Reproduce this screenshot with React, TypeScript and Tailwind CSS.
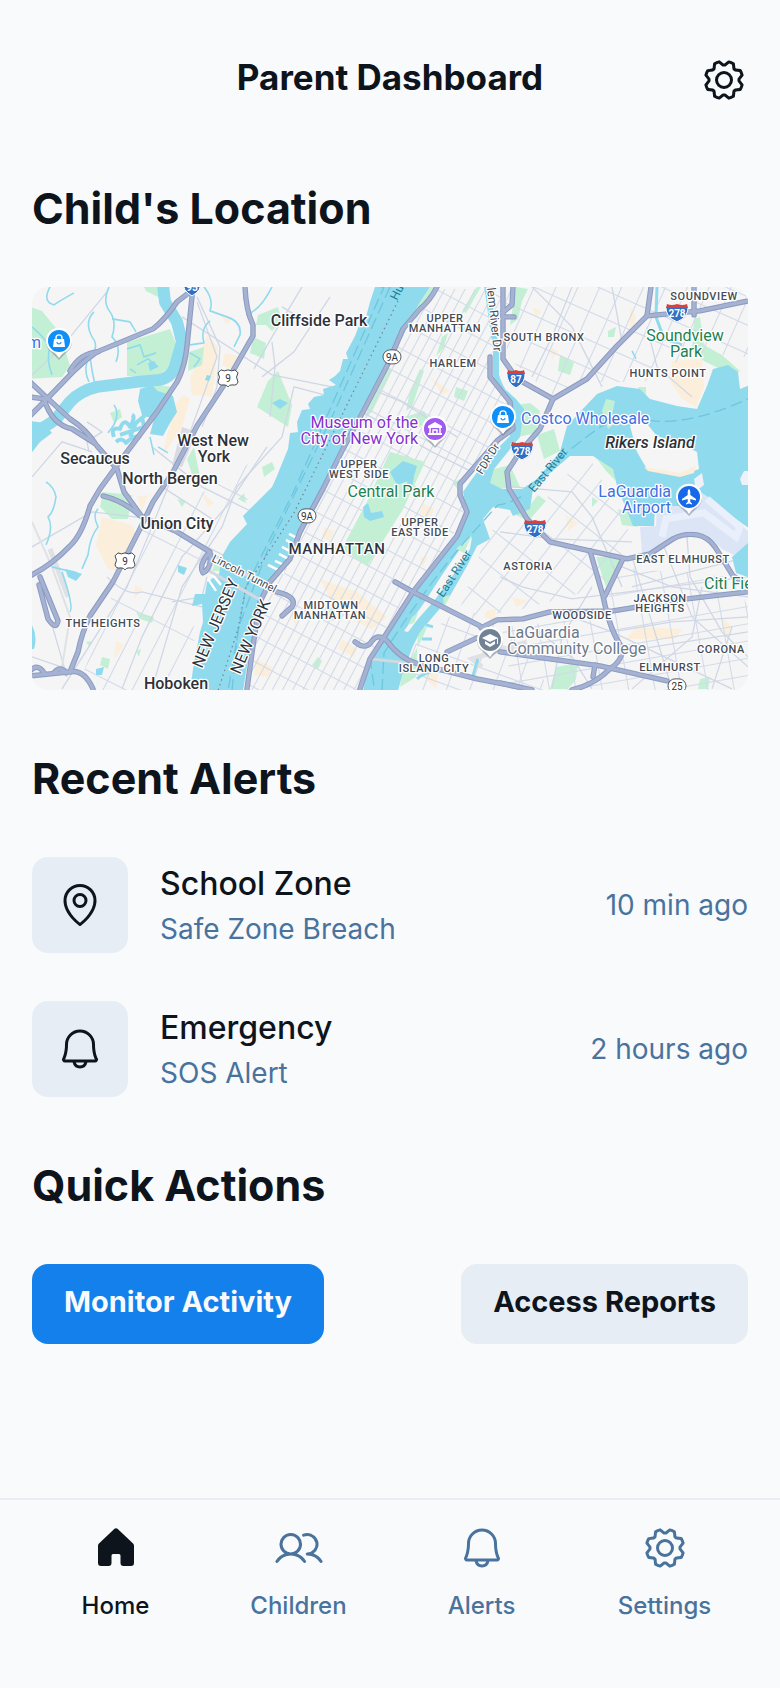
import type { ReactNode } from "react";
import { PiBell, PiGear } from "react-icons/pi";

function MapPinIcon() {
  return (
    <svg viewBox="0 0 256 256" fill="currentColor" className="size-12" aria-hidden="true">
      <path d="M128,64a40,40,0,1,0,40,40A40,40,0,0,0,128,64Zm0,64a24,24,0,1,1,24-24A24,24,0,0,1,128,128Zm0-112a88.1,88.1,0,0,0-88,88c0,31.4,14.51,64.68,42,96.25a254.19,254.19,0,0,0,41.45,38.3,8,8,0,0,0,9.18,0A254.19,254.19,0,0,0,174,200.25c27.45-31.57,42-64.85,42-96.25A88.1,88.1,0,0,0,128,16Zm0,206c-16.53-13-72-60.75-72-118a72,72,0,0,1,144,0C200,161.23,144.53,209,128,222Z" />
    </svg>
  );
}

function HouseIcon() {
  return (
    <svg viewBox="0 0 256 256" fill="currentColor" className="size-12" aria-hidden="true">
      <path d="M224,115.55V208a16,16,0,0,1-16,16H168a16,16,0,0,1-16-16V168a8,8,0,0,0-8-8H112a8,8,0,0,0-8,8v40a16,16,0,0,1-16,16H48a16,16,0,0,1-16-16V115.55a16,16,0,0,1,5.17-11.78l80-75.48.11-.11a16,16,0,0,1,21.53,0,1.14,1.14,0,0,0,.11.11l80,75.48A16,16,0,0,1,224,115.55Z" />
    </svg>
  );
}

function UsersIcon() {
  return (
    <svg viewBox="0 0 256 256" fill="currentColor" className="size-12" aria-hidden="true">
      <path d="M117.25,157.92a60,60,0,1,0-66.5,0A95.83,95.83,0,0,0,3.53,195.63a8,8,0,1,0,13.4,8.74,80,80,0,0,1,134.14,0,8,8,0,0,0,13.4-8.74A95.83,95.83,0,0,0,117.25,157.92ZM40,108a44,44,0,1,1,44,44A44.05,44.05,0,0,1,40,108Zm210.14,98.7a8,8,0,0,1-11.07-2.33A79.83,79.83,0,0,0,172,168a8,8,0,0,1,0-16,44,44,0,1,0-16.34-84.87,8,8,0,1,1-5.94-14.85,60,60,0,0,1,55.53,105.64,95.83,95.83,0,0,1,47.22,37.71A8,8,0,0,1,250.14,206.7Z" />
    </svg>
  );
}

/* ---------- Map ---------- */

const highways = [
  "M158,5 L145,15 Q132,34 121,42 L65,65 Q52,74 41,85 L15,112 L-2,129",
  "M161,0 L155,59 Q153,80 145,95 L125,125 L95,165 L68,202 L58,219 Q50,248 38,259 Q20,278 -2,289",
  "M-2,95 L14,110 L38,132 Q54,142 65,159 L85,182 L92,205 L110,230",
  "M-2,110 L12,112 Q20,138 40,142 L62,156",
  "M38,84 Q48,66 66,65",
  "M71,209 Q92,214 108,229 L145,245 L178,265 Q166,278 171,286 Q180,282 178,266",
  "M213,0 Q214,24 221,38 L221,49 L198,89 L165,139 L141,185 L121,215 L108,242 L81,295 L58,329 Q50,345 46,365 L38,385 L-2,389",
  "M38,385 Q52,382 61,402",
  "M7,298 L16,332 Q24,344 26,334 L8,290",
  "M-2,384 Q6,376 12,386 M22,386 Q28,378 34,386",
  "M405,0 Q398,14 388,22 L371,42 L355,79 L331,125 L311,162 L291,202 L268,245 L258,272 L238,295 L228,315 L221,359 L215,402",
  "M471,0 L471,72 L485,92 L521,112",
  "M458,70 L458,90 L478,115 L481,142 L466,153 L428,197 L428,208 L435,225 L425,249 L381,305 L351,352 L338,372 L328,402",
  "M716,14 L668,24 L615,29 L585,59 L555,92 L521,112 L508,142 L488,165 L475,185 L477,202 L495,232 L518,255 L558,264 L595,272 L618,267 L641,252 Q652,246 665,248 Q676,250 683,260 L701,289 L718,300",
  "M615,29 L619,0",
  "M471,30 L482,30 M481,0 L480,18 L470,26",
  "M558,264 L571,309 Q578,345 591,362 Q590,374 578,382 Q562,398 540,403",
  "M591,272 L573,309",
  "M716,305 L655,312 L581,324 L518,325 L491,332 L465,333 L449,341",
  "M363,295 L381,305 L448,339",
  "M323,355 Q334,364 340,354 Q346,346 355,354 Q368,372 386,377 L445,392 L486,400",
  "M415,365 L445,351",
  "M468,365 L568,379 L635,394",
  "M468,396 L500,403 M563,378 L561,390",
  "M245,305 Q266,310 260,320 L250,329",
  "M662,0 L662,28",
];

const minorRoads = [
  "M-2,90 L30,60 L75,5",
  "M165,15 L185,70 L160,140 L120,240 L95,300 L30,402",
  "M150,30 L240,88 L300,100",
  "M170,140 L185,100 L188,60 L165,10",
  "M270,0 L240,50 L222,82 M298,10 L262,65 L230,90",
  "M300,110 L262,100 L250,150 L205,200 L190,240 L150,300 L120,402",
  "M235,160 L196,218 L150,270 L110,350 L90,402",
  "M0,260 L60,225 L120,232 L238,292",
  "M0,190 L30,155 L60,165",
  "M55,135 L70,145 L55,155 L57,165",
  "M120,160 L170,200 L230,230",
  "M130,200 L180,232 M140,315 L170,310 L175,290",
  "M75,290 Q95,310 110,305 L170,320",
  "M20,338 L35,390 M0,370 L35,382",
  "M240,55 L243,80 L238,130 M250,20 L275,35",
  "M500,0 L540,40 L570,100 M540,0 L520,50 L500,90 M580,0 L590,55",
  "M615,40 L625,80 L660,110",
  "M468,245 L520,252 L600,255",
  "M480,200 L540,205 L560,230 L590,300",
  "M468,290 L490,300 L540,312 L716,290",
  "M600,300 L716,270 M590,280 L640,300 L716,310",
  "M580,345 L640,335 L716,330 M590,365 L716,345",
  "M600,270 L640,402 M630,255 L660,330 L716,380",
  "M655,250 L658,290 L690,345 L716,370",
  "M500,340 L540,370 L560,402 M540,330 L580,345 L700,402",
  "M520,402 L530,350 L560,300",
  "M600,402 L660,350 L670,300 M680,402 L700,340",
  "M310,90 L370,115 L425,150 M330,125 L400,165 L440,185",
];

const creeks = [
  "M18,0 Q10,15 22,18 L28,14 L42,6",
  "M77,0 Q70,15 78,25 Q85,35 80,50 Q90,60 84,75",
  "M80,32 L98,35 L104,45",
  "M62,25 Q52,35 60,50 Q68,60 58,70 Q60,85 63,98",
  "M55,75 Q52,85 57,95",
  "M0,40 Q12,50 18,60 Q14,72 20,88",
  "M172,0 Q182,12 178,24 L195,30 Q210,35 208,48 L202,60",
  "M158,58 L172,56 Q168,42 178,34 M162,80 L168,72 L158,66",
  "M240,0 Q228,24 214,28",
  "M82,118 Q90,130 76,146 M118,150 L122,168 M126,160 L136,166 M112,96 Q116,92 120,98",
  "M95,62 L108,58 L112,70 L124,66 M105,78 L116,72 L126,80 M98,82 L104,86",
  "M14,195 Q22,200 24,210 Q22,225 16,230 Q22,240 14,258",
  "M66,222 Q60,228 66,240 Q58,250 56,268 L50,282",
  "M20,280 L36,284 L46,288 M30,285 Q42,320 38,325",
  "M600,64 L604,72",
];

const creekPonds =
  "M33,282 L42,284 L50,287 L44,294 L36,290Z M146,278 L155,281 L152,288 L146,285Z M64,382 L72,380 L70,388 L64,388Z M0,338 Q6,350 2,362 L-2,362Z M116,76 L122,74 L126,80 L118,84Z M175,88 L179,89 L177,94 L173,93Z M240,116 L248,112 L256,116 L248,122Z";

const shore =
  "M474,103 L484,112 L492,122 L488,150 L475,166 L462,182 L458,196 L470,202 L490,202 L505,192 L528,165 L535,139 L548,125 L565,107 L585,99 L608,102 L618,112 L645,119 L665,122 L675,99 L681,82 L696,78 L706,85 L708,102 L718,98 L718,242 L675,212 L667,206 L650,219 L623,220 L622,239 L601,239 L585,199 L581,182 L561,169 L538,169 L518,186 L501,202 L498,222 L481,229 L478,223 L461,220 L451,232 L458,252 L445,259 L435,279 L418,309 L405,325 L388,345 L381,359 L371,385 L366,404 L331,404 L338,372 L348,352 L381,305 L405,275 L425,252 L435,225 L431,205 L440,192 L455,172 L478,149 L476,125Z";

const hudson =
  "M343,0 L338,15 L334,30 L328,36 L323,49 L314,66 L316,72 L311,72 L308,84 L303,89 L297,93 L304,98 L291,102 L292,108 L282,110 L276,117 L278,122 L270,123 L265,135 L266,145 L258,146 L256,162 L251,174 L245,189 L240,200 L231,209 L211,229 L215,237 L198,255 L190,269 L187,287 L175,295 L173,307 L163,307 L160,319 L170,317 L171,335 L168,345 L161,382 L158,404 L211,404 L215,379 L221,352 L225,325 L235,302 L238,292 L255,272 L268,242 L291,202 L293,195 L305,169 L323,142 L330,125 L341,102 L355,75 L371,49 L380,29 L388,15 L398,0Z";

const parks = [
  "M358,165 L393,175 L371,222 L335,279 L310,262 L335,215Z",
  "M95,55 L138,42 L145,59 L135,82 L125,89 L95,89Z",
  "M-2,20 L10,24 L28,46 L38,79 L30,90 L-2,92Z",
  "M112,0 L131,0 L130,12 L114,4Z",
  "M226,28 L236,24 L246,20 L250,34 L240,44 L234,38 L224,38Z",
  "M221,50 L234,56 L232,72 L218,66Z",
  "M236,94 L246,84 L260,118 L256,140 L225,120Z",
  "M78,126 L88,122 L90,130 L82,136Z",
  "M118,97 L140,100 L140,110 L126,104Z",
  "M157,65 L172,60 L170,78 L156,84Z",
  "M155,172 L162,160 L168,190 L160,188Z M230,180 L240,175 L243,182 L232,190Z",
  "M71,205 L100,208 L96,232 L80,232 L68,220Z",
  "M145,212 L154,214 L150,220Z M206,212 L212,206 L214,216Z",
  "M183,275 L192,275 L190,284 L180,284Z",
  "M104,325 L122,330 L120,336 L108,332Z M70,370 L78,372 L76,382 L68,378Z M54,355 L60,354 L58,360Z M104,364 L109,362 L107,370Z",
  "M398,0 L404,0 L390,22 L384,32 L380,26 L388,14Z",
  "M355,80 L360,84 L340,125 L333,130 L340,105Z",
  "M445,0 L449,0 L434,26 L430,24Z M410,50 L416,46 L412,60 L404,70Z M388,82 L392,84 L380,120 L374,124 L378,104Z",
  "M424,100 L436,104 L432,114 L422,110Z M484,0 L496,2 L490,14 L486,32 L478,38Z",
  "M372,130 L392,124 L398,134 L384,142Z",
  "M528,68 L542,76 L538,88 L526,84Z M576,44 L584,40 L582,50 L576,50Z",
  "M662,32 L668,30 L672,58 L690,68 L708,84 L700,88 L672,74 L660,64Z",
  "M484,118 L498,116 L508,124 L504,146 L486,150Z M505,148 L522,142 L528,164 L512,172Z M462,182 L478,178 L488,200 L466,202 L456,196Z",
  "M576,116 L584,112 L584,124 L578,130 L576,144 L570,124Z M606,100 L614,100 L614,110 L608,108Z",
  "M484,228 L498,218 L506,208 L514,214 L500,230 L496,234Z",
  "M586,222 L600,226 L606,240 L590,238Z M560,210 L566,214 L560,220Z",
  "M564,270 L590,270 L574,300Z",
  "M524,380 L546,376 L544,392 L536,402 L518,402Z M668,392 L678,390 L676,402 L666,402Z",
  "M386,345 L396,338 L390,352 L380,370 L370,384 L368,400 L384,390Z",
  "M286,370 L290,374 L286,382 L280,378Z M296,322 L304,318 L302,334 L296,332Z M420,196 L428,192 L426,202Z",
  "M562,168 L580,176 L584,194 L574,184Z",
];

const sand = [
  "M175,48 L186,60 L180,110 L160,108 L158,92Z",
  "M193,66 L210,70 L206,84 L190,78Z M188,28 L200,30 L196,38Z",
  "M150,108 L158,112 L150,140 L130,170 L142,120Z",
  "M70,230 L100,238 L104,248 L85,284 L76,282 L64,258Z",
  "M105,210 L116,208 L110,224Z M103,298 L110,302 L102,312Z M84,354 L92,358 L82,372Z M170,206 L182,216 L176,220Z",
  "M288,292 L325,305 L355,330 L340,342 L305,325Z",
  "M292,240 L302,244 L298,254 L290,250Z M390,216 L402,222 L398,232 L388,226Z M258,325 L266,328 L264,340Z M310,352 L325,362 L322,370 L306,362Z",
  "M224,372 L240,380 L236,390 L222,388Z M398,90 L418,104 L410,108Z M388,270 L396,270 L390,280Z",
  "M640,74 L670,72 L672,100 L664,120 L650,112 L638,94Z",
  "M500,20 L510,24 L504,30Z M598,20 L604,30 L598,50Z M518,60 L526,64 L520,74Z",
  "M604,340 L650,342 L644,352 L594,352Z M690,330 L700,340 L694,350Z M534,228 L546,236 L536,244Z M480,310 L496,314 L484,320Z",
  "M454,324 L464,322 L462,334 L452,330Z M390,388 L406,386 L404,402Z",
];

const ferryLines = [
  "M348,0 L352,0 L262,204 L214,300 L196,404",
  "M358,0 L300,130 L236,262 L206,342 L200,404",
];

function Grid({
  points,
  angle,
  step,
  cross,
  id,
}: {
  points: string;
  angle: number;
  step: number;
  cross: number;
  id: string;
}) {
  const lines: ReactNode[] = [];
  for (let d = -450; d <= 450; d += step) {
    lines.push(<line key={"a" + d} x1={d} y1={-450} x2={d} y2={450} />);
  }
  for (let d = -450; d <= 450; d += cross) {
    lines.push(<line key={"b" + d} x1={-450} y1={d} x2={450} y2={d} />);
  }
  return (
    <g clipPath={`url(#${id})`}>
      <clipPath id={id}>
        <polygon points={points} />
      </clipPath>
      <g transform={`translate(358 201) rotate(${angle})`} stroke="#d3dbe8" strokeWidth="1.1">
        {lines}
      </g>
    </g>
  );
}

function Halo({ children }: { children: ReactNode }) {
  return (
    <g stroke="#ffffff" strokeWidth="2.6" strokeLinejoin="round" className="[paint-order:stroke]">
      {children}
    </g>
  );
}

const districts: [number, number, string][] = [
  [413, 35, "UPPER"],
  [413, 45, "MANHATTAN"],
  [421, 80, "HARLEM"],
  [327, 181, "UPPER"],
  [327, 191, "WEST SIDE"],
  [388, 239, "UPPER"],
  [388, 249, "EAST SIDE"],
  [299, 322, "MIDTOWN"],
  [298, 332, "MANHATTAN"],
  [402, 375, "LONG"],
  [402, 385, "ISLAND CITY"],
  [512, 54, "SOUTH BRONX"],
  [672, 13, "SOUNDVIEW"],
  [636, 90, "HUNTS POINT"],
  [496, 283, "ASTORIA"],
  [651, 276, "EAST ELMHURST"],
  [628, 315, "JACKSON"],
  [628, 325, "HEIGHTS"],
  [550, 332, "WOODSIDE"],
  [689, 366, "CORONA"],
  [638, 384, "ELMHURST"],
  [71, 340, "THE HEIGHTS"],
];

const towns: [number, number, string][] = [
  [287, 39, "Cliffside Park"],
  [181, 159, "West New"],
  [182, 175, "York"],
  [63, 177, "Secaucus"],
  [138, 197, "North Bergen"],
  [145, 242, "Union City"],
  [144, 402, "Hoboken"],
];

function Interstate({ x, y, label }: { x: number; y: number; label: string }) {
  const w = label.length > 2 ? 11 : 9;
  return (
    <g transform={`translate(${x} ${y})`}>
      <path
        d={`M${-w},-7 Q${-w - 1},4 0,9 Q${w + 1},4 ${w},-7Z`}
        fill="#2f6fc4"
        stroke="#ffffff"
        strokeWidth="1"
      />
      <path d={`M${-w},-5 L${-w + 1},-9 Q${-w / 2},-7 0,-9 Q${w / 2},-7 ${w - 1},-9 L${w},-5Z`} fill="#d9423c" />
      <text y="4" textAnchor="middle" fontSize="10" fontWeight="700" fill="#ffffff">
        {label}
      </text>
    </g>
  );
}

function UsRoute({ x, y }: { x: number; y: number }) {
  return (
    <g transform={`translate(${x} ${y})`}>
      <path
        d="M-7,-8 Q-4,-6 0,-8 Q4,-6 7,-8 L10,-5 Q7,-1 10,4 Q9,8 4,7 Q1,7 0,9 Q-1,7 -4,7 Q-9,8 -10,4 Q-7,-1 -10,-5Z"
        fill="#ffffff"
        stroke="#444a52"
        strokeWidth="1"
      />
      <text y="4" textAnchor="middle" fontSize="10" fill="#333333">
        9
      </text>
    </g>
  );
}

function StateRoute({ x, y, label }: { x: number; y: number; label: string }) {
  return (
    <g transform={`translate(${x} ${y})`}>
      <rect x="-9" y="-7" width="18" height="14" rx="7" fill="#ffffff" stroke="#555b63" />
      <text y="4" textAnchor="middle" fontSize="10" fill="#333333">
        {label}
      </text>
    </g>
  );
}

function Pin({ x, y, color, children }: { x: number; y: number; color: string; children: ReactNode }) {
  return (
    <g transform={`translate(${x} ${y})`}>
      <path d="M0,18 L-8,10 A13,13 0 1,1 8,10Z" fill="#6b7380" opacity="0.45" transform="translate(0 1)" />
      <path d="M0,17 Q-3,12 -8,10 A13,13 0 1,1 8,10 Q3,12 0,17Z" fill="#ffffff" />
      <circle r="11" fill={color} />
      {children}
    </g>
  );
}

function BagGlyph() {
  return (
    <g>
      <path d="M-5,-2 H5 L6,6 H-6Z" fill="#ffffff" />
      <path d="M-3,-1 V-3 A3,3 0 0,1 3,-3 V-1" fill="none" stroke="#ffffff" strokeWidth="1.4" />
      <path d="M-2,1 A2,2 0 0,0 2,1" fill="none" stroke="#1e8fff" strokeWidth="1.2" />
    </g>
  );
}

function CityMap() {
  return (
    <svg
      viewBox="0 0 716 403"
      preserveAspectRatio="xMidYMid slice"
      role="img"
      aria-label="Map of Manhattan and its surroundings"
      className="aspect-video w-full rounded-2xl font-[Roboto,sans-serif]"
    >
      <rect width="716" height="403" fill="#f5f5f6" />
      <g fill="#fbeedb">
        {sand.map((d) => (
          <path key={d} d={d} />
        ))}
      </g>
      <g fill="#c3f0d5">
        {parks.map((d) => (
          <path key={d} d={d} />
        ))}
      </g>

      <Grid id="manhattan" angle={28} step={9} cross={23} points="405,2 470,2 458,80 476,118 476,140 430,196 432,225 420,250 380,303 348,350 326,403 216,403 226,320 258,275 292,205 332,128 372,45" />
      <Grid id="jersey" angle={27} step={26} cross={75} points="110,240 180,200 235,165 200,250 160,310 165,403 45,403 85,295" />
      <Grid id="bronx" angle={24} step={20} cross={26} points="474,0 716,0 716,70 660,65 612,95 560,95 522,110 475,70" />
      <Grid id="astoria" angle={38} step={17} cross={30} points="470,228 500,232 530,190 560,175 600,250 570,300 480,325 425,330 450,260" />
      <Grid id="queens" angle={-10} step={26} cross={17} points="580,280 700,290 716,320 716,403 480,403 470,340 575,330" />
      <Grid id="lic" angle={20} step={22} cross={28} points="380,360 430,320 470,340 520,403 370,403" />
      <path d="M335,215 L358,165 L393,175 L371,222 L335,279 L310,262Z" fill="#c3f0d5" />

      <g fill="none" stroke="#cfd7e5" strokeWidth="1.3">
        {minorRoads.map((d) => (
          <path key={d} d={d} />
        ))}
      </g>
      <path d="M150,140 L165,145 L150,180 L140,178Z" fill="#d9dbe0" />
      <path d="M18,262 L36,310 M495,355 L440,372 L450,380" fill="none" stroke="#dfe1e5" strokeWidth="5" />
      <path d="M0,235 L20,280 L38,330 L30,380" fill="none" stroke="#dfe1e5" strokeWidth="2" />

      <g fill="#90daee">
        <path d={hudson} />
        <path d={shore} />
        <path d="M108,102 L120,98 L126,104 L141,109 L145,125 L138,136 L131,149 L118,147 L122,132 L110,128 L106,114Z" />
        <path d="M-2,134 L12,136 L20,146 L8,155 L-2,168Z" />
        <path d="M358,185 L371,174 L385,179 L381,192 L365,198Z M331,220 L336,216 L339,226 L350,224 L352,230 L338,234 L332,230Z M376,192 L382,190 L380,200 L374,200Z" />
        <path d={creekPonds} />
      </g>
      <g fill="none" stroke="#90daee" strokeLinejoin="round">
        <path d="M131,-2 L133,15 L145,35 L150,55 L143,79 Q140,90 128,93 L105,95 L65,100 Q48,104 38,115 L25,131 Q14,141 -2,146" strokeWidth="12" />
        <path d="M455,-2 L464,62 L464,88 Q468,104 482,118 L486,128" strokeWidth="6" />
        <path d="M625,0 L624,30 L632,52 L650,58" strokeWidth="3" />
        <path d="M82,150 Q78,140 88,142 Q92,130 98,140 Q104,130 100,128 M84,155 Q90,150 94,156 Q104,146 108,152 M88,148 L100,144 L112,140 L110,130 M98,150 L104,136 L116,126" strokeWidth="4" />
        <path d="M385,392 Q398,380 420,386 L440,392 L446,372 M390,352 L400,352 M394,338 L401,340" strokeWidth="3" />
        <g strokeWidth="1.6">
          {creeks.map((d) => (
            <path key={d} d={d} />
          ))}
        </g>
      </g>

      <path d="M598,139 L611,132 L625,149 L648,156 L665,165 L667,182 L648,189 L615,182 L605,165Z" fill="#f5f5f6" />
      <path d="M612,180 L648,186 L664,178 L662,186 L648,190 L616,184Z" fill="#fbeedb" />
      <path d="M574,112 L583,114 L580,128 L583,136 L576,142 L570,124Z" fill="#c3f0d5" />
      <path d="M440,250 L428,262 L410,288 L392,316 L372,344 L376,345 L386,332 L402,314 L424,284 L438,262Z" fill="#f5f5f6" />
      <path d="M440,248 L424,262 L432,266Z M380,330 L386,326 L382,336 L376,338Z M411,310 L419,308 L412,320Z" fill="#c3f0d5" />
      <path d="M708,192 L712,184 L718,184 L718,198 L710,198Z M662,192 L670,186 L672,198 L664,204Z" fill="#eef1f8" />
      <path d="M608,240 L624,239 L625,220 L650,219 L670,206 L682,214 L718,246 L716,258 L702,268 L690,262 L678,250 L658,244 L640,250 L618,264 L610,266Z" fill="#dce5f6" />
      <path d="M675,212 L708,240 L704,250 L672,226 L634,232 L630,250" fill="none" stroke="#eaf0fb" strokeWidth="7" />
      <path d="M716,256 L700,270 L704,286 L716,290Z" fill="#90daee" />

      <g stroke="#ffffff" strokeWidth="2.4">
        <path d="M240,280 L252,286 M243,274 L256,280 M247,267 L258,273 M250,260 L261,266 M254,253 L264,259 M257,247 L267,252 M176,292 L184,304 M180,287 L189,298 M236,278 L248,284" />
      </g>
      <g fill="none" stroke="#6dc6de" strokeWidth="1.3" strokeDasharray="12 5">
        {ferryLines.map((d) => (
          <path key={d} d={d} />
        ))}
        <path d="M502,196 Q540,158 575,136 L610,132 Q650,142 716,112" />
        <path d="M350,404 L352,366 Q400,290 446,240 L466,218 Q480,216 492,208 M338,370 L342,400" />
      </g>
      <path d="M366,14 L262,226 L214,300 L206,342 L186,404" fill="none" stroke="#718a9c" strokeWidth="1.3" strokeDasharray="1.5 3.5" />
      <path d="M178,266 L245,306 M170,280 L228,313 M338,372 L376,376" fill="none" stroke="#d5d9df" strokeWidth="3" />

      <g fill="none" strokeLinejoin="round" strokeLinecap="round">
        <g stroke="#8b9bc2" strokeWidth="5.4">
          {highways.map((d) => (
            <path key={d} d={d} />
          ))}
        </g>
        <g stroke="#a5b2d2" strokeWidth="3.4">
          {highways.map((d) => (
            <path key={d} d={d} />
          ))}
        </g>
      </g>

      <g className="tracking-wider" fontSize="11" fontWeight="500" fill="#444b55" textAnchor="middle">
        <Halo>
          {districts.map(([x, y, label]) => (
            <text key={x + "-" + y} x={x} y={y}>
              {label}
            </text>
          ))}
          <text x="305" y="267" fontSize="15" fill="#30353c">
            MANHATTAN
          </text>
        </Halo>
      </g>
      <g fontSize="16" fontWeight="500" fill="#2e3238" textAnchor="middle">
        <Halo>
          {towns.map(([x, y, label]) => (
            <text key={label} x={x} y={y}>
              {label}
            </text>
          ))}
          <text x="618" y="161" fontStyle="italic">
            Rikers Island
          </text>
        </Halo>
      </g>
      <g fontSize="16" fill="#1d8150" textAnchor="middle">
        <Halo>
          <text x="359" y="210">Central Park</text>
          <text x="653" y="54">Soundview</text>
          <text x="654" y="70">Park</text>
          <text x="672" y="302" textAnchor="start">Citi Field</text>
        </Halo>
      </g>
      <g fontSize="16" textAnchor="end">
        <Halo>
          <text x="386" y="141" fill="#8430ce">Museum of the</text>
          <text x="386" y="157" fill="#8430ce">City of New York</text>
          <text x="639" y="210" fill="#3f6fe0">LaGuardia</text>
          <text x="639" y="226" fill="#3f6fe0">Airport</text>
          <text x="9" y="61" fill="#3f6fe0">m</text>
          <text x="489" y="137" fill="#3f6fe0" textAnchor="start">Costco Wholesale</text>
          <text x="475" y="351" fill="#6b7a8c" textAnchor="start">LaGuardia</text>
          <text x="475" y="367" fill="#6b7a8c" textAnchor="start">Community College</text>
        </Halo>
      </g>
      <g fontSize="12" fill="#444b55">
        <Halo>
          <text transform="translate(179 274) rotate(27)" fontSize="11">Lincoln Tunnel</text>
          <text transform="translate(450 188) rotate(-58)" fontSize="11">FDR Dr</text>
          <text transform="translate(453 -18) rotate(84)">Harlem River Dr</text>
          <text transform="translate(170 382) rotate(-67)" fontSize="16" fill="#2e3238">NEW JERSEY</text>
          <text transform="translate(208 388) rotate(-67)" fontSize="16" fill="#2e3238">NEW YORK</text>
        </Halo>
      </g>
      <g fontSize="12" fill="#1b7f96">
        <text transform="translate(411 311) rotate(-57)">East River</text>
        <text transform="translate(502 206) rotate(-50)">East River</text>
        <text transform="translate(365 14) rotate(-63)">Hudson River</text>
      </g>

      <UsRoute x={196} y={91} />
      <UsRoute x={93} y={274} />
      <StateRoute x={360} y={70} label="9A" />
      <StateRoute x={275} y={229} label="9A" />
      <StateRoute x={645} y={399} label="25" />
      <Interstate x={160} y={0} label="95" />
      <Interstate x={484} y={92} label="87" />
      <Interstate x={645} y={26} label="278" />
      <Interstate x={490} y={164} label="278" />
      <Interstate x={503} y={242} label="278" />

      <Pin x={27} y={54} color="#0f8ff8">
        <BagGlyph />
      </Pin>
      <Pin x={471} y={130} color="#0f8ff8">
        <BagGlyph />
      </Pin>
      <Pin x={403} y={142} color="#a05af0">
        <path d="M0,-7 L7,-3 V-1 H-7 V-3Z M-7,4 H7 V6 H-7Z" fill="#ffffff" />
        <path d="M-5,-1 V4 M5,-1 V4 M-2,4 V1 H2 V4" fill="none" stroke="#ffffff" strokeWidth="1.5" />
      </Pin>
      <Pin x={657} y={210} color="#1769e8">
        <path d="M0,-8 Q1.3,-7 1.3,-5 V-2 L7,2 V3.5 L1.3,2 V5 L3,6.5 V7.5 L0,6.7 L-3,7.5 V6.5 L-1.3,5 V2 L-7,3.5 V2 L-1.3,-2 V-5 Q-1.3,-7 0,-8Z" fill="#ffffff" />
      </Pin>
      <Pin x={458} y={353} color="#718294">
        <path d="M0,-6 L8,-2 L0,2 L-8,-2Z M-5,1 L0,4 L5,1 V4 L0,7 L-5,4Z M7,-2 H8 V4 H7Z" fill="#ffffff" />
      </Pin>
    </svg>
  );
}

/* ---------- Page ---------- */

function SectionTitle({ children }: { children: ReactNode }) {
  return (
    <h2 className="px-8 pt-[37px] pb-[27px] text-[43px] leading-[55px] font-bold">{children}</h2>
  );
}

function Alert({
  icon,
  title,
  detail,
  time,
}: {
  icon: ReactNode;
  title: string;
  detail: string;
  time: string;
}) {
  return (
    <li className="flex min-h-36 items-center gap-8 px-8">
      <div className="flex size-24 shrink-0 items-center justify-center rounded-2xl bg-[#e7edf4]">{icon}</div>
      <div className="min-w-0 flex-1">
        <p className="text-[32px] leading-12 font-medium">{title}</p>
        <p className="text-[28px] leading-[42px] text-[#49739c]">{detail}</p>
      </div>
      <time className="shrink-0 text-[28px] leading-[42px] text-[#49739c]">{time}</time>
    </li>
  );
}

const navItems = [
  { label: "Home", icon: <HouseIcon />, active: true },
  { label: "Children", icon: <UsersIcon />, active: false },
  { label: "Alerts", icon: <PiBell className="size-12" />, active: false },
  { label: "Settings", icon: <PiGear className="size-12" />, active: false },
];

export default function App() {
  return (
    <div className="flex min-h-screen flex-col justify-between bg-slate-50 font-[Inter,'Noto_Sans',sans-serif] text-[#0d141c]">
      <main>
        <header className="flex items-center justify-between px-8 pt-8 pb-4">
          <h1 className="flex-1 pb-[6px] pl-24 text-center text-[35px] leading-[45px] font-bold">Parent Dashboard</h1>
          <button type="button" aria-label="Settings" className="flex h-24 w-24 items-center justify-end">
            <PiGear className="size-12" />
          </button>
        </header>

        <section>
          <SectionTitle>Child's Location</SectionTitle>
          <div className="px-8 py-6">
            <CityMap />
          </div>
        </section>

        <section>
          <SectionTitle>Recent Alerts</SectionTitle>
          <ul>
            <Alert icon={<MapPinIcon />} title="School Zone" detail="Safe Zone Breach" time="10 min ago" />
            <Alert icon={<PiBell className="size-12" />} title="Emergency" detail="SOS Alert" time="2 hours ago" />
          </ul>
        </section>

        <section>
          <SectionTitle>Quick Actions</SectionTitle>
          <div className="flex flex-wrap justify-between gap-6 px-8 py-6">
            <button type="button" className="h-20 rounded-2xl bg-[#1380ec] px-8 pb-1 text-[29px] leading-[42px] font-bold text-slate-50">
              Monitor Activity
            </button>
            <button type="button" className="h-20 rounded-2xl bg-[#e7edf4] px-8 pb-1 text-[29px] leading-[42px] font-bold">
              Access Reports
            </button>
          </div>
        </section>
      </main>

      <nav className="grid grid-cols-4 gap-4 border-t-2 border-[#e7edf4] px-8 pt-4 pb-16">
        {navItems.map((item) => (
          <a
            key={item.label}
            href="#"
            aria-current={item.active ? "page" : undefined}
            className={
              item.active
                ? "flex flex-col items-center gap-2"
                : "flex flex-col items-center gap-2 text-[#49739c]"
            }
          >
            <span className="flex h-16 items-center">{item.icon}</span>
            <span className="text-2xl leading-9 font-medium">{item.label}</span>
          </a>
        ))}
      </nav>
    </div>
  );
}
